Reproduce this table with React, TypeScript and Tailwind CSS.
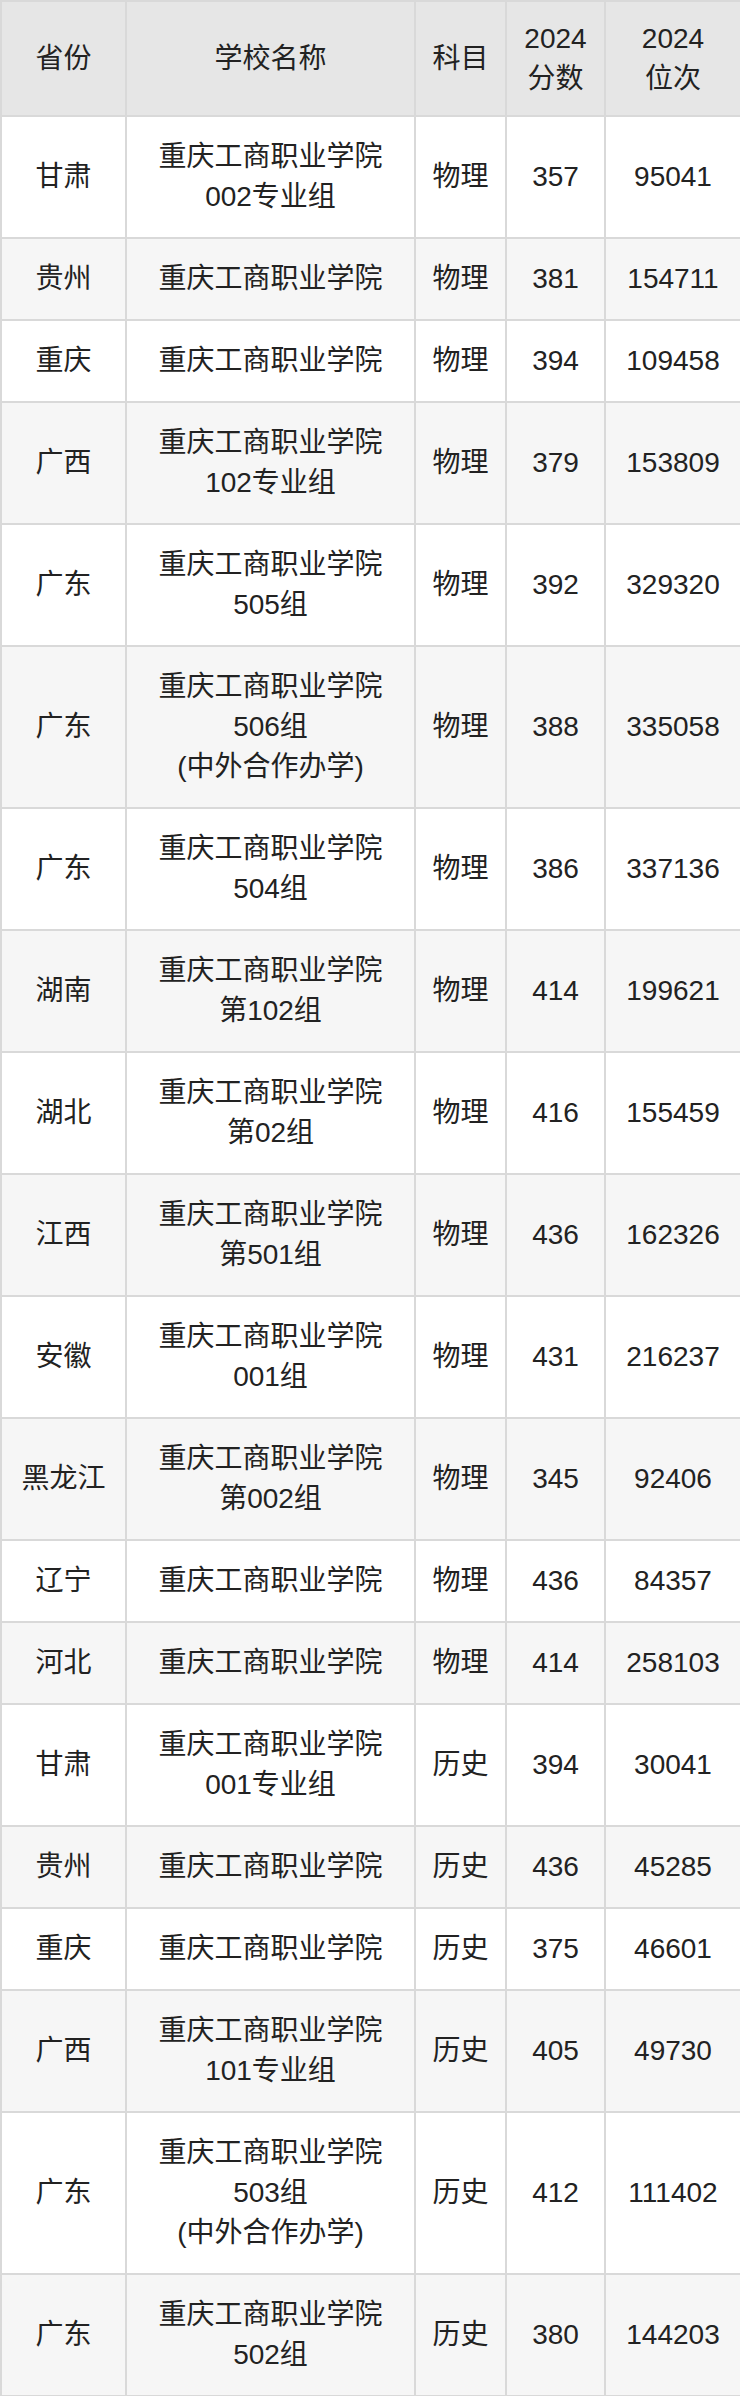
const rows: [string, string[], string, string, string][] = [
  ["甘肃", ["重庆工商职业学院", "002专业组"], "物理", "357", "95041"],
  ["贵州", ["重庆工商职业学院"], "物理", "381", "154711"],
  ["重庆", ["重庆工商职业学院"], "物理", "394", "109458"],
  ["广西", ["重庆工商职业学院", "102专业组"], "物理", "379", "153809"],
  ["广东", ["重庆工商职业学院", "505组"], "物理", "392", "329320"],
  ["广东", ["重庆工商职业学院", "506组", "(中外合作办学)"], "物理", "388", "335058"],
  ["广东", ["重庆工商职业学院", "504组"], "物理", "386", "337136"],
  ["湖南", ["重庆工商职业学院", "第102组"], "物理", "414", "199621"],
  ["湖北", ["重庆工商职业学院", "第02组"], "物理", "416", "155459"],
  ["江西", ["重庆工商职业学院", "第501组"], "物理", "436", "162326"],
  ["安徽", ["重庆工商职业学院", "001组"], "物理", "431", "216237"],
  ["黑龙江", ["重庆工商职业学院", "第002组"], "物理", "345", "92406"],
  ["辽宁", ["重庆工商职业学院"], "物理", "436", "84357"],
  ["河北", ["重庆工商职业学院"], "物理", "414", "258103"],
  ["甘肃", ["重庆工商职业学院", "001专业组"], "历史", "394", "30041"],
  ["贵州", ["重庆工商职业学院"], "历史", "436", "45285"],
  ["重庆", ["重庆工商职业学院"], "历史", "375", "46601"],
  ["广西", ["重庆工商职业学院", "101专业组"], "历史", "405", "49730"],
  ["广东", ["重庆工商职业学院", "503组", "(中外合作办学)"], "历史", "412", "111402"],
  ["广东", ["重庆工商职业学院", "502组"], "历史", "380", "144203"],
]

const th = "border-2 border-[#d9d9d9] bg-[#e6e6e6] pt-[17px] pb-[16px] px-1 font-normal text-center align-middle"
const td = "border-2 border-[#d9d9d9] py-[20px] px-1 text-center align-middle"

export default function App() {
  return (
    <div
      className="w-[740px] bg-white text-[#222] text-[28px] leading-[40px]"
      style={{ fontFamily: '"Liberation Sans", "Noto Sans CJK SC", sans-serif' }}
    >
      <table className="w-[740px] table-fixed border-collapse">
        <colgroup>
          <col className="w-[125px]" />
          <col className="w-[289px]" />
          <col className="w-[91px]" />
          <col className="w-[99px]" />
          <col className="w-[136px]" />
        </colgroup>
        <thead>
          <tr>
            <th className={th}>省份</th>
            <th className={th}>学校名称</th>
            <th className={th}>科目</th>
            <th className={th}>
              2024
              <br />
              分数
            </th>
            <th className={th}>
              2024
              <br />
              位次
            </th>
          </tr>
        </thead>
        <tbody>
          {rows.map((r, i) => (
            <tr key={i} className={i % 2 === 1 ? "bg-[#f6f6f6]" : "bg-white"}>
              <td className={td}>{r[0]}</td>
              <td className={td}>
                {r[1].map((line, j) => (
                  <div key={j}>{line}</div>
                ))}
              </td>
              <td className={td}>{r[2]}</td>
              <td className={td}>{r[3]}</td>
              <td className={td}>{r[4]}</td>
            </tr>
          ))}
        </tbody>
      </table>
    </div>
  )
}
